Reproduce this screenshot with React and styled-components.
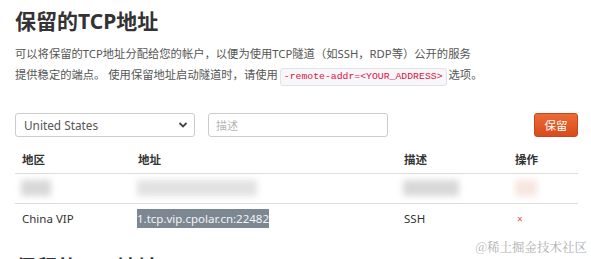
import React from 'react';
import styled, { createGlobalStyle } from 'styled-components';

const GlobalStyle = createGlobalStyle`
  body {
    margin: 0;
    background: #fff;
    font-family: "Noto Sans", "Noto Sans CJK SC", sans-serif;
    color: #333;
  }
`;

const Page = styled.div`
  position: relative;
  height: 259px;
  overflow: hidden;
  padding: 0 13px 0 15px;
`;

const Title = styled.h2`
  margin: ${(p) => (p.next ? '12px 0 0' : '0')};
  padding-top: 6px;
  font-size: 21px;
  line-height: 30px;
  font-weight: 700;
  color: #333;
`;

const Intro = styled.p`
  margin: 7px 0 0;
  font-size: 11.3px;
  line-height: 21px;
  color: #555;
`;

const Code = styled.code`
  display: inline-block;
  line-height: 14px;
  font-family: "Liberation Mono", "DejaVu Sans Mono", monospace;
  font-size: 9.8px;
  color: #d14;
  background: #f7f7f9;
  border: 1px solid #e1e1e8;
  border-radius: 3px;
  padding: 1px 3px;
  margin: 0 2px;
`;

const Toolbar = styled.form`
  display: flex;
  align-items: center;
  gap: 13px;
  margin-top: 27px;
`;

const Select = styled.div`
  width: 180px;
  height: 24px;
  box-sizing: border-box;
  border: 1px solid #ccc;
  border-radius: 3px;
  display: flex;
  align-items: center;
  justify-content: space-between;
  padding: 0 6px 0 8px;
  font-size: 11.8px;
  color: #555;
`;

const Input = styled.input`
  width: 180px;
  height: 24px;
  box-sizing: border-box;
  border: 1px solid #ccc;
  border-radius: 3px;
  padding: 0 7px;
  font-family: inherit;
  font-size: 11px;
  &::placeholder {
    color: #b5b5b5;
  }
`;

const Button = styled.button`
  margin-left: auto;
  width: 44px;
  height: 24px;
  border: 1px solid #c9461c;
  border-radius: 3px;
  background: linear-gradient(#ec6a35, #d84b1d);
  color: #fff;
  font-family: inherit;
  font-size: 11.5px;
  padding: 0;
`;

const Table = styled.table`
  width: 100%;
  table-layout: fixed;
  margin-top: 8px;
  border-collapse: collapse;
  font-size: 11.5px;
`;

const Th = styled.th`
  box-sizing: border-box;
  text-align: left;
  font-weight: 700;
  color: #333;
  height: 28px;
  padding: 0 7px;
  width: ${(p) => (p.w ? `${p.w}px` : 'auto')};
  border-bottom: 1px solid #ddd;
`;

const Td = styled.td`
  height: ${(p) => (p.tall ? 30 : 29)}px;
  padding: 0 7px 0 ${(p) => (p.tight ? 6 : 7)}px;
  color: #333;
  white-space: nowrap;
  border-bottom: ${(p) => (p.last ? 'none' : '1px solid #ddd')};
`;

const Blur = styled.span`
  display: inline-block;
  vertical-align: middle;
  width: ${(p) => p.w}px;
  height: 16px;
  background: ${(p) => p.c || '#d8d8d8'};
  filter: blur(3px);
`;

const Selected = styled.span`
  background: #7d8792;
  color: #f4f4f4;
  padding: 2px 0;
`;

const Remove = styled.span`
  color: #e0533a;
  font-size: 10px;
  padding-left: 2px;
`;

const Watermark = styled.div`
  position: absolute;
  right: 4px;
  bottom: 3px;
  font-size: 12.5px;
  color: #b0b0b0;
  font-family: "Noto Serif CJK SC", "Noto Sans CJK SC", serif;
`;

const Chevron = () => (
  <svg width="10" height="8" viewBox="0 0 10 8">
    <path d="M1.5 2l3.5 3.5L8.5 2" fill="none" stroke="#444" strokeWidth="1.8" />
  </svg>
);

export default function App() {
  return (
    <>
      <GlobalStyle />
      <Page>
        <Title>保留的TCP地址</Title>
        <Intro>
          可以将保留的TCP地址分配给您的帐户，以便为使用TCP隧道（如SSH，RDP等）公开的服务
          <br />
          提供稳定的端点。 使用保留地址启动隧道时，请使用<Code>-remote-addr=&lt;YOUR_ADDRESS&gt;</Code>选项。
        </Intro>
        <Toolbar>
          <Select>
            <span>United States</span>
            <Chevron />
          </Select>
          <Input placeholder="描述" />
          <Button type="button">保留</Button>
        </Toolbar>
        <Table>
          <thead>
            <tr>
              <Th w={116}>地区</Th>
              <Th w={266}>地址</Th>
              <Th w={111}>描述</Th>
              <Th>操作</Th>
            </tr>
          </thead>
          <tbody>
            <tr>
              <Td tight><Blur w={30} /></Td>
              <Td tight><Blur w={120} c="#e2e2e2" /></Td>
              <Td tight><Blur w={56} /></Td>
              <Td><Blur w={22} c="#f6e6e0" /></Td>
            </tr>
            <tr>
              <Td tall last>China VIP</Td>
              <Td tall last tight><Selected>1.tcp.vip.cpolar.cn:22482</Selected></Td>
              <Td tall last>SSH</Td>
              <Td tall last><Remove>×</Remove></Td>
            </tr>
          </tbody>
        </Table>
        <Title next>保留的TCP地址</Title>
        <Watermark>@稀土掘金技术社区</Watermark>
      </Page>
    </>
  );
}
